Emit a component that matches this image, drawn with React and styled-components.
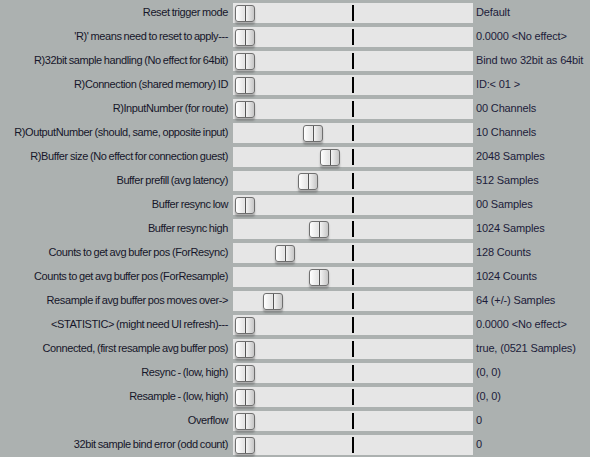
import React from "react";
import styled, { createGlobalStyle } from "styled-components";

const Global = createGlobalStyle`
html, body {
  margin: 0;
  padding: 0;
  background: #acb1b0;
}
`;

const rows = [
  ["Reset trigger mode", 2, "Default"],
  ["'R)' means need to reset to apply---", 2, "0.0000 <No effect>"],
  ["R)32bit sample handling (No effect for 64bit)", 2, "Bind two 32bit as 64bit"],
  ["R)Connection (shared memory) ID", 2, "ID:< 01 >"],
  ["R)InputNumber (for route)", 2, "00 Channels"],
  ["R)OutputNumber (should, same, opposite input)", 70, "10 Channels"],
  ["R)Buffer size (No effect for connection guest)", 87, "2048 Samples"],
  ["Buffer prefill (avg latency)", 65, "512 Samples"],
  ["Buffer resync low", 2, "00 Samples"],
  ["Buffer resync high", 76, "1024 Samples"],
  ["Counts to get avg bufer pos (ForResync)", 42, "128 Counts"],
  ["Counts to get avg buffer pos (ForResample)", 76, "1024 Counts"],
  ["Resample if avg buffer pos moves over->", 30, "64 (+/-) Samples"],
  ["<STATISTIC> (might need UI refresh)---", 2, "0.0000 <No effect>"],
  ["Connected, (first resample avg buffer pos)", 2, "true, (0521 Samples)"],
  ["Resync - (low, high)", 2, "(0, 0)"],
  ["Resample - (low, high)", 2, "(0, 0)"],
  ["Overflow", 2, "0"],
  ["32bit sample bind error (odd count)", 2, "0"],
];

export default function App() {
  return (
    <Panel>
      <Global />
      {rows.map(([label, pos, value]) => (
        <Row key={label}>
          <Label>{label}</Label>
          <Track>
            <CenterMark />
            <Thumb $pos={pos} />
          </Track>
          <Value>{value}</Value>
        </Row>
      ))}
    </Panel>
  );
}

const Panel = styled.div`
width: 590px;
height: 457px;
background: #acb1b0;
font-family: "Liberation Sans", Arial, sans-serif;
font-size: 11px;
`;

const Row = styled.div`
display: grid;
grid-template-columns: 228px 240px 1fr;
column-gap: 5px;
height: 24px;
align-items: start;
`;

const Label = styled.div`
text-align: right;
color: #16162a;
white-space: nowrap;
line-height: 25px;
letter-spacing: -0.4px;
word-spacing: -0.6px;
`;

const Track = styled.div`
position: relative;
margin-top: 3px;
height: 20px;
background: #e6e6e6;
`;

const CenterMark = styled.div`
position: absolute;
left: 119px;
top: 2px;
width: 1.5px;
height: 16px;
background: #000;
`;

const Thumb = styled.div`
position: absolute;
top: 1.5px;
left: ${(p) => p.$pos}px;
width: 18px;
height: 15px;
border: 1px solid #6f6f6f;
border-radius: 3px;
background:
  linear-gradient(#555, #555) center / 1px 100% no-repeat,
  linear-gradient(90deg, #ffffff 0%, #e4e4e4 45%, #f4f4f4 55%, #c6c6c6 100%);
box-shadow: 0 3px 2px rgba(70, 70, 70, 0.35);
`;

const Value = styled.div`
margin-left: -2px;
color: #1c1c3a;
white-space: nowrap;
line-height: 25px;
letter-spacing: -0.15px;
`;
